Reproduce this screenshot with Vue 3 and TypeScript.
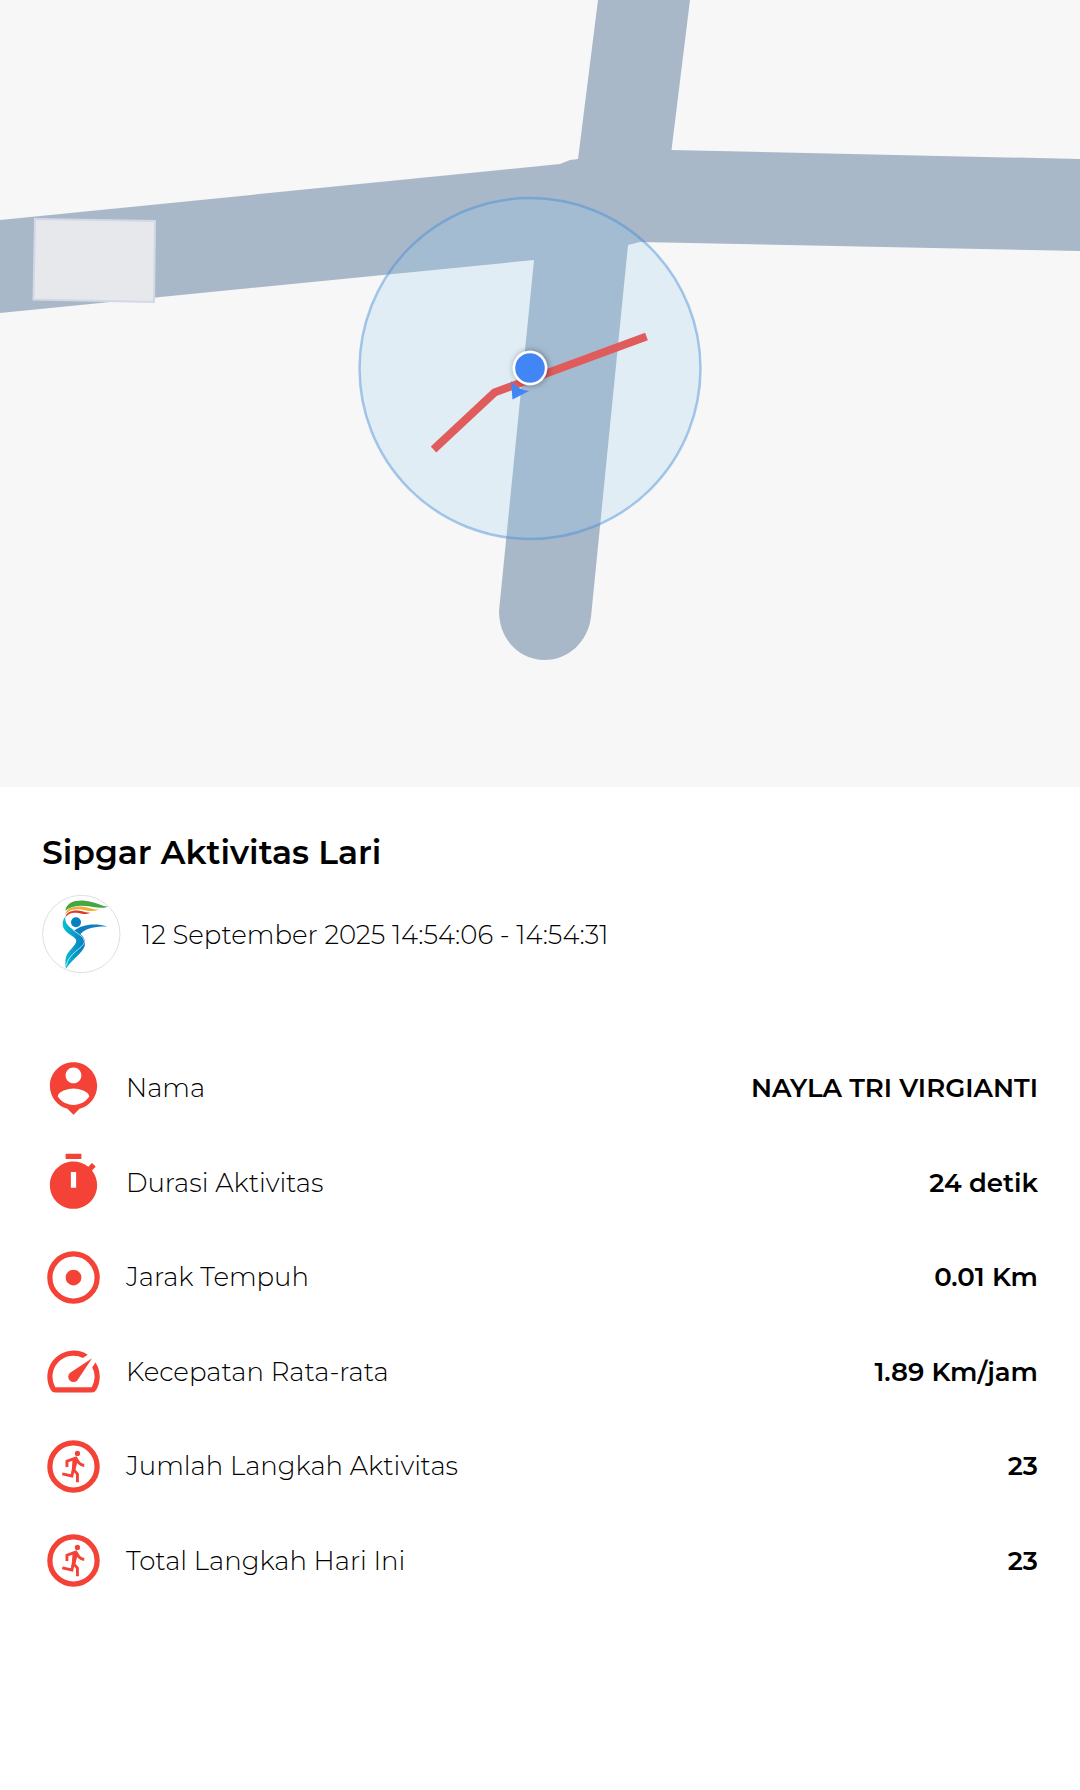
<script setup lang="ts">
type IconName = 'person' | 'timer' | 'target' | 'speed' | 'run'

interface Stat {
  icon: IconName
  label: string
  value: string
}

const stats: Stat[] = [
  { icon: 'person', label: 'Nama', value: 'NAYLA TRI VIRGIANTI' },
  { icon: 'timer', label: 'Durasi Aktivitas', value: '24 detik' },
  { icon: 'target', label: 'Jarak Tempuh', value: '0.01 Km' },
  { icon: 'speed', label: 'Kecepatan Rata-rata', value: '1.89 Km/jam' },
  { icon: 'run', label: 'Jumlah Langkah Aktivitas', value: '23' },
  { icon: 'run', label: 'Total Langkah Hari Ini', value: '23' },
]
</script>

<template>
  <main class="activity">
    <svg class="map" viewBox="0 0 1080 787" role="img" aria-label="Peta rute lari">
      <defs>
        <filter id="dot-shadow" x="-50%" y="-50%" width="200%" height="200%">
          <feDropShadow dx="1" dy="0" stdDeviation="3" flood-color="#000" flood-opacity="0.4" />
        </filter>
      </defs>
      <rect width="1080" height="787" fill="#f7f7f7" />
      <path
        fill="#a9b8c9"
        d="M598 0H690L671.500 150L1080 159V251L640 242L628 245L591 617C588 642 568 660 545 660C518 660 499 638 499 611L534 260L0 313V220L560 164L570 160L578 159Z"
      />
      <path d="M35 219L155 221L154 302L33.500 299.500Z" fill="#e7e8ec" stroke="#d3d8e6" stroke-width="2" />
      <circle cx="530" cy="368.500" r="170.500" fill="#92cff2" fill-opacity="0.22" stroke="#428cd6" stroke-opacity="0.45" stroke-width="2.500" />
      <path d="M433.500 449.500L494.500 392.500L646.500 336.500" fill="none" stroke="#e05c5c" stroke-width="8" />
      <path d="M511 381Q518 390 529 391L512.500 399.500Z" fill="#4285f4" />
      <circle cx="530" cy="368" r="17.300" fill="#fff" filter="url(#dot-shadow)" />
      <circle cx="530" cy="368" r="14.800" fill="#4285f4" />
    </svg>

    <section class="details">
      <h1 class="title">Sipgar Aktivitas Lari</h1>
      <div class="meta">
        <svg class="avatar" viewBox="0 0 237 237" aria-hidden="true">
          <defs>
            <linearGradient id="body" x1="0" y1="0" x2="1" y2="0">
              <stop offset="0" stop-color="#08c3d3" />
              <stop offset="1" stop-color="#0878bd" />
            </linearGradient>
          </defs>
          <circle cx="118" cy="117" r="116" fill="#fff" stroke="#cfcfcf" stroke-width="2" />
          <path fill="#43a746" d="M70 47C74 22 98 15 128 17C158 19 178 33 198 35C177 42 158 37 140 34C112 29 86 34 70 47Z" />
          <path fill="#f4ad31" d="M70 58C72 38 98 32 124 35C144 38 156 45 172 43C156 52 138 47 122 44C98 40 80 45 70 58Z" />
          <path fill="#e0382f" d="M70 67C72 50 92 44 112 47C126 49 135 54 146 53C132 60 120 56 109 54C90 51 78 56 70 67Z" />
          <circle cx="102" cy="82" r="15" fill="#087fc0" />
          <path fill="#0d80c0" d="M97 107C116 91 155 82 198 95C169 94 138 97 121 112L112 121Z" />
          <path fill="url(#body)" d="M70 65C61 75 58 91 69 106C79 119 96 124 102 134C106 144 92 156 80 171C67 187 70 205 72 221C88 196 122 173 128 153C134 127 115 116 97 106C76 93 68 81 70 65Z" />
          <path fill="none" stroke="#fff" stroke-width="2" d="M92 104C114 121 127 126 127 142C122 160 78 176 73 212" />
        </svg>
        <time class="period" datetime="2025-09-12T14:54:06">12 September 2025 14:54:06 - 14:54:31</time>
      </div>

      <dl class="stats">
        <div v-for="stat in stats" :key="stat.label" class="stat">
          <dt class="label">
            <svg class="icon" viewBox="0 0 24 24" aria-hidden="true">
              <path
                v-if="stat.icon === 'person'"
                fill="currentColor"
                fill-rule="evenodd"
                d="M12 2c-4.970 0-9 4.030-9 9 0 4.170 2.840 7.670 6.690 8.690L12 22l2.310-2.310C18.160 18.670 21 15.170 21 11c0-4.970-4.030-9-9-9zm0 2c1.660 0 3 1.340 3 3s-1.340 3-3 3-3-1.340-3-3 1.340-3 3-3zm0 14.300c-2.500 0-4.710-1.280-6-3.220.030-1.990 4-3.080 6-3.080 1.990 0 5.970 1.090 6 3.080-1.290 1.940-3.500 3.220-6 3.220z"
              />
              <path
                v-else-if="stat.icon === 'timer'"
                fill="currentColor"
                fill-rule="evenodd"
                d="M15 1H9v2h6V1zm-4 13h2V8h-2v6zm8.030-6.610l1.420-1.420c-.430-.510-.900-.990-1.410-1.410l-1.420 1.420C16.070 4.740 14.120 4 12 4c-4.970 0-9 4.030-9 9s4.020 9 9 9 9-4.030 9-9c0-2.120-.740-4.070-1.970-5.610z"
              />
              <template v-else-if="stat.icon === 'target'">
                <circle cx="12" cy="12" r="9" fill="none" stroke="currentColor" stroke-width="2" />
                <circle cx="12" cy="12" r="3" fill="currentColor" />
              </template>
              <path
                v-else-if="stat.icon === 'speed'"
                fill="currentColor"
                d="M20.380 8.570l-1.230 1.850a8 8 0 0 1-.220 7.580H5.070A8 8 0 0 1 15.580 6.850l1.850-1.230A10 10 0 0 0 3.350 19a2 2 0 0 0 1.720 1h13.850a2 2 0 0 0 1.740-1 10 10 0 0 0-.270-10.440zm-9.790 6.840a2 2 0 0 0 2.830 0l5.660-8.490-8.490 5.660a2 2 0 0 0 0 2.830z"
              />
              <g v-else fill="none" stroke="currentColor">
                <circle cx="12" cy="12" r="9" stroke-width="2" />
                <circle cx="13.500" cy="7" r="1" fill="currentColor" stroke="none" />
                <path stroke-width="1.100" d="M9.500 12.200V10L12.900 8.800L14.100 10.700Q14.900 11.500 16.100 11.600M12 13.200L13.500 14.900V18M12.300 11L11.400 15.600L7.700 14.800" />
                <path fill="currentColor" stroke="none" d="M11.600 9L13.200 8.400L13.600 9.700L12.700 13.400L11.400 14.200Z" />
              </g>
            </svg>
            <span>{{ stat.label }}</span>
          </dt>
          <dd class="value">{{ stat.value }}</dd>
        </div>
      </dl>
    </section>
  </main>
</template>

<style>
body {
  margin: 0;
  background: #fff;
}
</style>

<style scoped>
.activity {
  color: #000;
  font-family: Montserrat, Inter, sans-serif;
  font-size: 26px;
  line-height: 32px;
}

.map {
  display: block;
  width: 100%;
}

.details {
  padding: 44px 42px;
}

.title {
  margin: 0 0 22px;
  font-size: 33px;
  font-weight: 600;
  line-height: 42px;
}

.meta {
  display: flex;
  align-items: center;
  gap: 21px;
  font-weight: 300;
}

.avatar {
  flex: none;
  width: 79px;
  height: 79px;
}

.stats {
  display: grid;
  grid-auto-rows: 1fr;
  min-height: 567px;
  margin: 67px 0 0;
}

.stat {
  display: flex;
  align-items: center;
  justify-content: space-between;
  gap: 21px;
}

.label {
  display: flex;
  align-items: center;
  gap: 21px;
  font-weight: 300;
}

.icon {
  flex: none;
  width: 63px;
  height: 63px;
  color: #f44336;
}

.value {
  margin: 0;
  font-weight: 600;
  text-align: right;
}
</style>
